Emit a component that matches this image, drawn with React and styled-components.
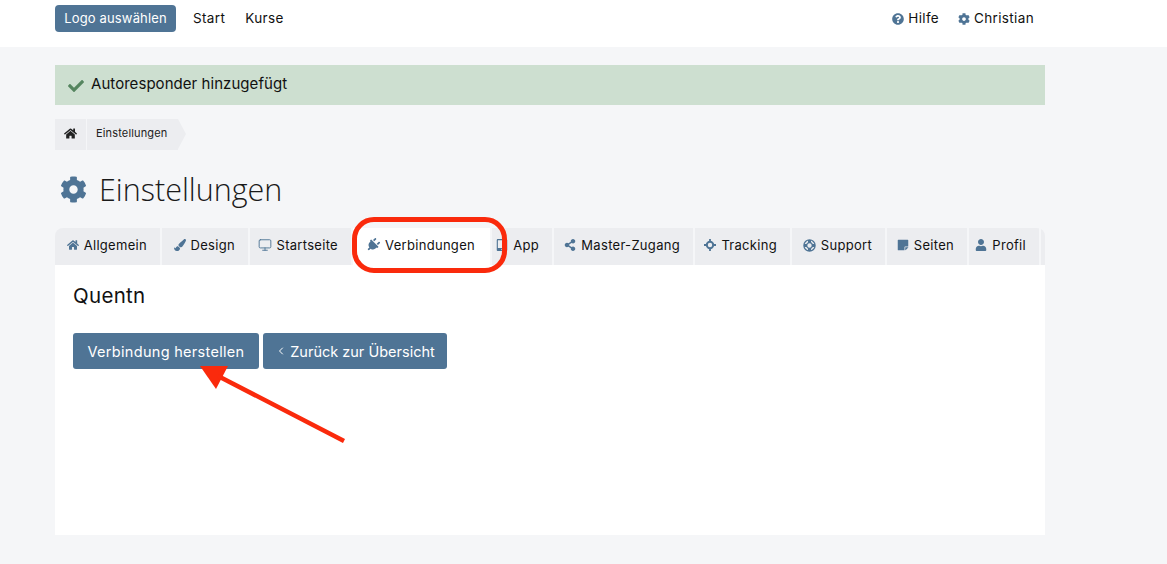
import styled, { createGlobalStyle } from "styled-components";
import {
  FaCheck,
  FaCog,
  FaHome,
  FaPaintBrush,
  FaPlug,
  FaQuestionCircle,
  FaShareAlt,
  FaStickyNote,
  FaTabletAlt,
  FaUser,
} from "react-icons/fa";
import { ChevronLeft, Monitor } from "lucide-react";

const GlobalStyle = createGlobalStyle`
  html, body {
    margin: 0;
    padding: 0;
    background: #f5f6f8;
    color: #111;
    font-family: Inter, "Liberation Sans", sans-serif;
  }
`;

const Page = styled.div`
  position: relative;
  width: 1167px;
  height: 564px;
  overflow: hidden;
`;

const TopBar = styled.header`
  height: 47px;
  background: #fff;
  padding: 5px 133px 0 55px;
  box-sizing: border-box;
  display: flex;
  align-items: flex-start;
`;

const LogoButton = styled.button`
  width: 121px;
  height: 27px;
  border: 0;
  border-radius: 4px;
  padding: 0 0 1px;
  background: #4f7495;
  color: #fff;
  font: 400 13px Inter, sans-serif;
  letter-spacing: 0.15px;
`;

const NavLink = styled.a`
  margin-left: ${(p) => p.$gap}px;
  line-height: 27px;
  font-size: 13.5px;
  letter-spacing: 0.35px;
  color: #111;
`;

const UserNav = styled.nav`
  margin-left: auto;
  display: flex;
  gap: 19px;
  line-height: 27px;
  font-size: 13.5px;
  letter-spacing: 0.35px;
`;

const UserItem = styled.span`
  display: flex;
  align-items: center;
  gap: 4px;
  svg {
    color: #4f7495;
    font-size: 12px;
  }
`;

const Container = styled.main`
  width: 990px;
  margin-left: 55px;
  padding-top: 18px;
`;

const Alert = styled.div`
  height: 40px;
  background: #cddfd0;
  display: flex;
  align-items: center;
  gap: 7px;
  padding: 0 0 3px 13px;
  box-sizing: border-box;
  font-size: 15px;
  letter-spacing: 0.05px;
  svg {
    margin-top: 5px;
    color: #55855f;
    font-size: 16px;
  }
`;

const Crumbs = styled.div`
  display: flex;
  margin-top: 14px;
  height: 31px;
`;

const CrumbHome = styled.span`
  width: 31px;
  background: #ecedf0;
  margin-right: 1px;
  padding-bottom: 2px;
  box-sizing: border-box;
  display: flex;
  align-items: center;
  justify-content: center;
  font-size: 13px;
  color: #222;
`;

const CrumbCurrent = styled.span`
  position: relative;
  width: 91px;
  background: #ecedf0;
  font-size: 11px;
  letter-spacing: 0.15px;
  line-height: 29px;
  padding-left: 9px;
  box-sizing: border-box;
  color: #222;
  &::after {
    content: "";
    position: absolute;
    left: 100%;
    top: 0;
    border-left: 8px solid #ecedf0;
    border-top: 15.5px solid transparent;
    border-bottom: 15.5px solid transparent;
  }
`;

const Title = styled.h1`
  margin: 9px 0 9px;
  height: 60px;
  padding-left: 5px;
  display: flex;
  align-items: center;
  gap: 12px;
  font: 300 30.5px "Open Sans", sans-serif;
  color: #1a1a1a;
  svg {
    color: #4f7495;
    font-size: 27px;
  }
`;

const Tabs = styled.div`
  display: flex;
  height: 37px;
  gap: 2px;
  border-radius: 8px 8px 0 0;
  overflow: hidden;
`;

const Tab = styled.a`
  width: ${(p) => p.$w}px;
  flex: none;
  background: ${(p) => (p.$active ? "#fff" : "#ecedf0")};
  padding: 0 ${(p) => (p.$active ? 15 : 13)}px 3px 0;
  box-sizing: border-box;
  display: flex;
  align-items: center;
  justify-content: flex-end;
  gap: 5px;
  font-size: 13px;
  letter-spacing: 0.3px;
  color: #111;
  svg {
    flex: none;
    color: #4f7495;
    font-size: 12px;
  }
`;

const PlugIcon = styled(FaPlug)`
  font-size: 14px !important;
  transform: rotate(45deg);
`;

const Panel = styled.section`
  height: 270px;
  background: #fff;
  padding: 18px 18px 0;
  box-sizing: border-box;
`;

const PanelTitle = styled.h2`
  margin: 0;
  font-size: 20.5px;
  font-weight: 400;
  letter-spacing: 0.3px;
  line-height: 26px;
`;

const Actions = styled.div`
  display: flex;
  gap: 4px;
  margin-top: 24px;
`;

const ActionButton = styled.button`
  width: ${(p) => p.$w}px;
  height: 36px;
  border: 0;
  border-radius: 3px;
  padding: 0;
  background: #4f7495;
  color: #fff;
  display: flex;
  align-items: center;
  justify-content: center;
  gap: 3px;
  font: 400 14.5px Inter, sans-serif;
  letter-spacing: ${(p) => p.$track}px;
`;

const Highlight = styled.div`
  position: absolute;
  left: 352px;
  top: 217px;
  width: 155px;
  height: 56px;
  box-sizing: border-box;
  border: 5px solid #fa2a0c;
  border-radius: 22px;
`;

const ArrowOverlay = styled.svg`
  position: absolute;
  left: 190px;
  top: 360px;
`;

function TrackingIcon() {
  return (
    <svg width="12" height="12" viewBox="0 0 12 12" fill="none" stroke="currentColor">
      <circle cx="6" cy="6" r="3.2" strokeWidth="2" />
      <path d="M6 0v3M6 9v3M0 6h3M9 6h3" strokeWidth="1.8" />
    </svg>
  );
}

function SupportIcon() {
  return (
    <svg width="13" height="13" viewBox="0 0 13 13" fill="none" stroke="currentColor">
      <circle cx="6.5" cy="6.5" r="5.6" strokeWidth="1.3" />
      <circle cx="6.5" cy="6.5" r="2.8" strokeWidth="1.2" />
      <path d="M6.5 1v3M6.5 9v3M1 6.5h3M9 6.5h3" strokeWidth="3" />
    </svg>
  );
}

const tabs = [
  { label: "Allgemein", icon: <FaHome />, w: 105 },
  { label: "Design", icon: <FaPaintBrush />, w: 86 },
  { label: "Startseite", icon: <Monitor size={14} strokeWidth={1.6} />, w: 101 },
  { label: "Verbindungen", icon: <PlugIcon />, w: 137, active: true },
  { label: "App", icon: <FaTabletAlt />, w: 60 },
  { label: "Master-Zugang", icon: <FaShareAlt />, w: 139 },
  { label: "Tracking", icon: <TrackingIcon />, w: 95 },
  { label: "Support", icon: <SupportIcon />, w: 93 },
  { label: "Seiten", icon: <FaStickyNote />, w: 80 },
  { label: "Profil", icon: <FaUser />, w: 70 },
  { label: "", icon: null, w: 4 },
];

function App() {
  return (
    <Page>
      <GlobalStyle />
      <TopBar>
        <LogoButton>Logo auswählen</LogoButton>
        <NavLink $gap={17}>Start</NavLink>
        <NavLink $gap={20}>Kurse</NavLink>
        <UserNav>
          <UserItem>
            <FaQuestionCircle /> Hilfe
          </UserItem>
          <UserItem>
            <FaCog /> Christian
          </UserItem>
        </UserNav>
      </TopBar>
      <Container>
        <Alert>
          <FaCheck /> Autoresponder hinzugefügt
        </Alert>
        <Crumbs>
          <CrumbHome>
            <FaHome />
          </CrumbHome>
          <CrumbCurrent>Einstellungen</CrumbCurrent>
        </Crumbs>
        <Title>
          <FaCog /> Einstellungen
        </Title>
        <Tabs>
          {tabs.map((t, i) => (
            <Tab key={i} $w={t.w} $active={t.active}>
              {t.icon}
              {t.label}
            </Tab>
          ))}
        </Tabs>
        <Panel>
          <PanelTitle>Quentn</PanelTitle>
          <Actions>
            <ActionButton $w={186} $track={0.3}>
              Verbindung herstellen
            </ActionButton>
            <ActionButton $w={184} $track={0}>
              <ChevronLeft size={12} strokeWidth={2} /> Zurück zur Übersicht
            </ActionButton>
          </Actions>
        </Panel>
      </Container>
      <Highlight />
      <ArrowOverlay width="170" height="90" viewBox="0 0 170 90">
        <polygon points="10,6 38,6 26,29" fill="#fa2a0c" />
        <line x1="28" y1="16" x2="154" y2="81" stroke="#fa2a0c" strokeWidth="4.5" />
      </ArrowOverlay>
    </Page>
  );
}

export default App;
